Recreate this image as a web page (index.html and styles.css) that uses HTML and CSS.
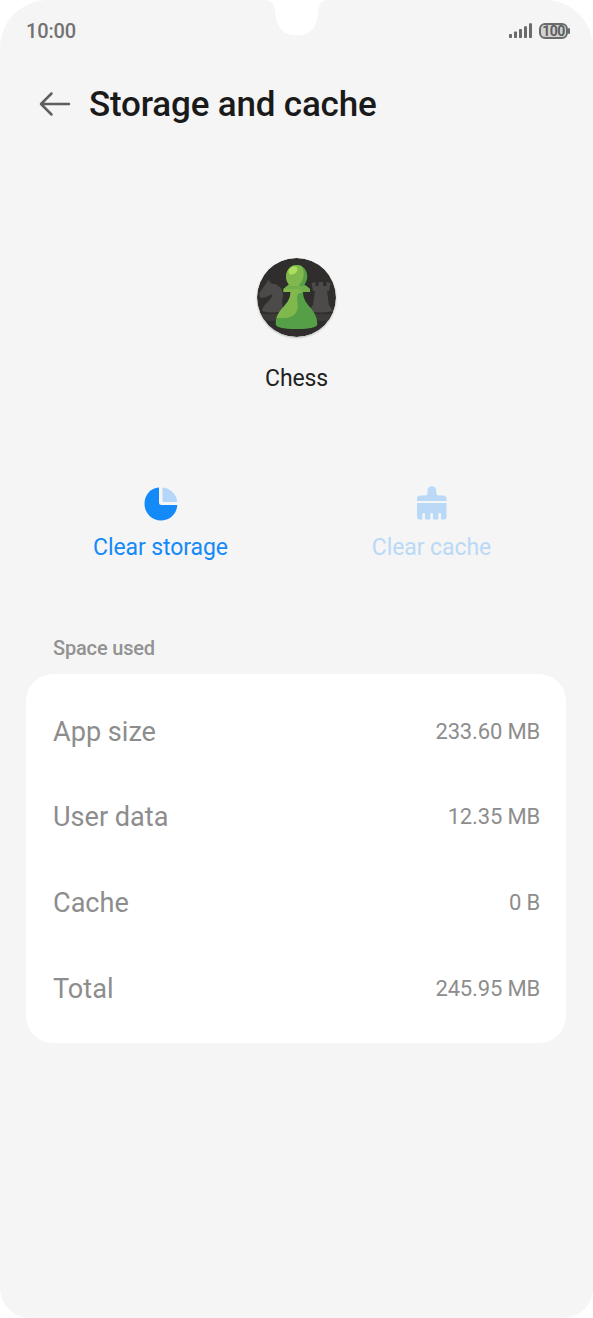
FILE: index.html
```html
<!DOCTYPE html>
<html lang="en">
<head>
<meta charset="utf-8">
<title>Storage and cache</title>
<link rel="stylesheet" href="styles.css">
</head>
<body>
<main class="screen">
  <svg class="notch" width="62" height="36" viewBox="0 0 62 36"><path d="M0 0C12 2 7 14 12 24C15 32 21 35.300 31 35.300C41 35.300 46 32 50 24C54 14 49 2 61 0Z" fill="#fff"/></svg>
  <div class="status">
    <span class="time">10:00</span>
    <div class="indicators">
      <svg width="24" height="16" viewBox="0 0 24 16" fill="#6b6b6b"><rect x="0" y="11" width="3" height="4" rx=".7"/><rect x="5" y="8.500" width="3" height="6.500" rx=".7"/><rect x="10" y="6" width="3" height="9" rx=".7"/><rect x="15" y="3.300" width="3" height="11.700" rx=".7"/><rect x="20" y=".3" width="3" height="14.700" rx=".7"/></svg>
      <div class="battery"><span>100</span></div>
    </div>
  </div>
  <header class="header">
    <svg width="32" height="26" viewBox="0 0 32 26" fill="none" stroke="#5e5e5e" stroke-width="2.500" stroke-linecap="round" stroke-linejoin="round"><path d="M30 13H2M12.500 2.500L2 13L12.500 23.500"/></svg>
    <h1>Storage and cache</h1>
  </header>
  <section class="app">
    <svg class="app-icon" width="79" height="79" viewBox="0 0 79 79">
      <defs>
        <clipPath id="disc"><circle cx="39.500" cy="39.500" r="39.500"/></clipPath>
        <clipPath id="pawn"><path d="M32 26.500C26 19 30 7 39.700 7C49.500 7 53.500 19 47.500 26.500L53 31V34H46C46 48 60 50 60.300 66Q60.300 71 39.500 71Q18.700 71 18.700 66C19 50 33.500 48 33.500 34H26.500V31Z"/></clipPath>
      </defs>
      <g clip-path="url(#disc)">
        <rect width="79" height="79" fill="#302e2c"/>
        <path d="M0 55Q14 58 28 54V61Q14 65 0 61ZM51 54Q65 58 79 55V61Q65 65 51 61Z" fill="#3d3b39"/>
        <path d="M5 53C6 45 15 43 15.500 36Q10 39 5 40Q1 39 3 34L8 27Q10 25 11 22L14.500 25.500C24 26 28 34 25 43L26 53Q15 56 5 53Z" fill="#4d4b4a"/>
        <path d="M54.500 25L58.500 24V28H61.500V24H66V28H69.500V24L73.500 25L72 33H70L72 47L76 53Q64 56 51.500 53L56 47L58 33H56Z" fill="#4d4b4a"/>
        <g clip-path="url(#pawn)">
          <rect width="79" height="79" fill="#55a046"/>
          <path d="M15 5H43C49 14 47 22 42 27L46 34L41 36C38 44 44 48 38 56C33 61 25 60 15 60Z" fill="#80b84d"/>
          <path d="M26 28H53V34H45L42 31H26Z" fill="#72ae4a"/>
        </g>
        <ellipse cx="36" cy="12.500" rx="5" ry="3.500" transform="rotate(-35 36 12.500)" fill="#aede61"/>
      </g>
    </svg>
    <p>Chess</p>
  </section>
  <div class="actions">
    <button class="action clear-storage">
      <svg width="36" height="36" viewBox="0 0 36 36"><path d="M16 1.500C6.500 2 1.500 10 1.500 18A16.500 16.500 0 0 0 18 34.500C27 34.500 34 27.500 34.300 19H18.500Q16 19 16 16.500Z" fill="#1489f8"/><path d="M19.500 1.500C27 2 33.500 8 34.300 16H21Q19.500 16 19.500 14.500Z" fill="#b4d6f8"/></svg>
      <span>Clear storage</span>
    </button>
    <button class="action clear-cache">
      <svg width="36" height="36" viewBox="0 0 36 36" fill="#bad9f6"><path d="M3 15V13Q3 9.500 6.500 9.500H11Q13.500 9.500 13.500 7V4.700A4.400 4.400 0 0 1 22.300 4.700V7Q22.300 9.500 24.500 9.500H29Q32.500 9.500 32.500 13V15ZM3 17H32.500V31Q32.500 33.500 30 33.500H27V28.500Q27 27 25.700 27Q24.300 27 24.300 28.500V33.500H19V28.500Q19 27 17.700 27Q16.300 27 16.300 28.500V33.500H11V28.500Q11 27 9.700 27Q8.300 27 8.300 28.500V33.500H5.500Q3 33.500 3 31Z"/></svg>
      <span>Clear cache</span>
    </button>
  </div>
  <h2>Space used</h2>
  <dl class="card">
    <div class="row"><dt>App size</dt><dd>233.60 MB</dd></div>
    <div class="row"><dt>User data</dt><dd>12.35 MB</dd></div>
    <div class="row"><dt>Cache</dt><dd>0 B</dd></div>
    <div class="row"><dt>Total</dt><dd>245.95 MB</dd></div>
  </dl>
</main>
</body>
</html>
```
FILE: styles.css
```css
* { box-sizing: border-box; margin: 0; padding: 0; }
body { background: #fff; font-family: Roboto, "Liberation Sans", sans-serif; }
.screen { position: relative; width: 593px; height: 1318px; background: #f5f5f5; border-radius: 48px 48px 30px 30px; overflow: hidden; }
.notch { position: absolute; left: 266px; top: 0; }
.status { height: 62px; padding: 0 23px 0 26px; display: flex; align-items: center; justify-content: space-between; }
.time { font-size: 20px; line-height: 24px; font-weight: 500; letter-spacing: -.15px; color: #727272; }
.indicators { display: flex; align-items: center; gap: 6px; }
.battery { position: relative; width: 29px; height: 16px; margin-right: 2px; border: 2px solid #6b6b6b; border-radius: 6px; background: #d2d2d2; display: flex; align-items: center; justify-content: center; }
.battery::after { content: ""; position: absolute; right: -4px; top: 3px; width: 2px; height: 6px; border-radius: 1px; background: #6b6b6b; }
.battery span { font-size: 14px; line-height: 12px; font-weight: 700; color: #5e5e5e; letter-spacing: -.5px; }
.header { height: 84px; padding-left: 39px; display: flex; align-items: center; gap: 18px; }
h1 { padding-top: 1px; font-size: 35px; line-height: 41px; font-weight: 500; letter-spacing: -.18px; color: #1a1a1a; }
.app { padding-top: 112px; display: flex; flex-direction: column; align-items: center; }
.app-icon { border-radius: 50%; box-shadow: 0 1px 2px #bbb; }
.app p { margin-top: 28px; font-size: 23px; line-height: 28px; letter-spacing: -.15px; color: #222; }
.actions { margin-top: 93px; padding: 0 26px 0 25px; display: grid; grid-template-columns: 1fr 1fr; }
.action { border: 0; background: none; font: inherit; display: flex; flex-direction: column; align-items: center; gap: 12px; }
.action span { font-size: 23px; line-height: 28px; letter-spacing: -.08px; }
.clear-storage { color: #1489f8; }
.clear-cache { color: #bad9f6; }
h2 { margin: 74px 0 0 53px; font-size: 20px; line-height: 24px; font-weight: 500; letter-spacing: -.17px; color: #929292; }
.card { margin: 14px 27px 0 26px; height: 369px; padding: 15px 26px 11px 27px; border-radius: 27px; background: #fff; }
.row { height: 85.6px; display: flex; align-items: center; justify-content: space-between; color: #8d8d8d; }
dt { font-size: 27.1px; line-height: 34px; }
dd { font-size: 22px; line-height: 28px; letter-spacing: -.16px; }
```
